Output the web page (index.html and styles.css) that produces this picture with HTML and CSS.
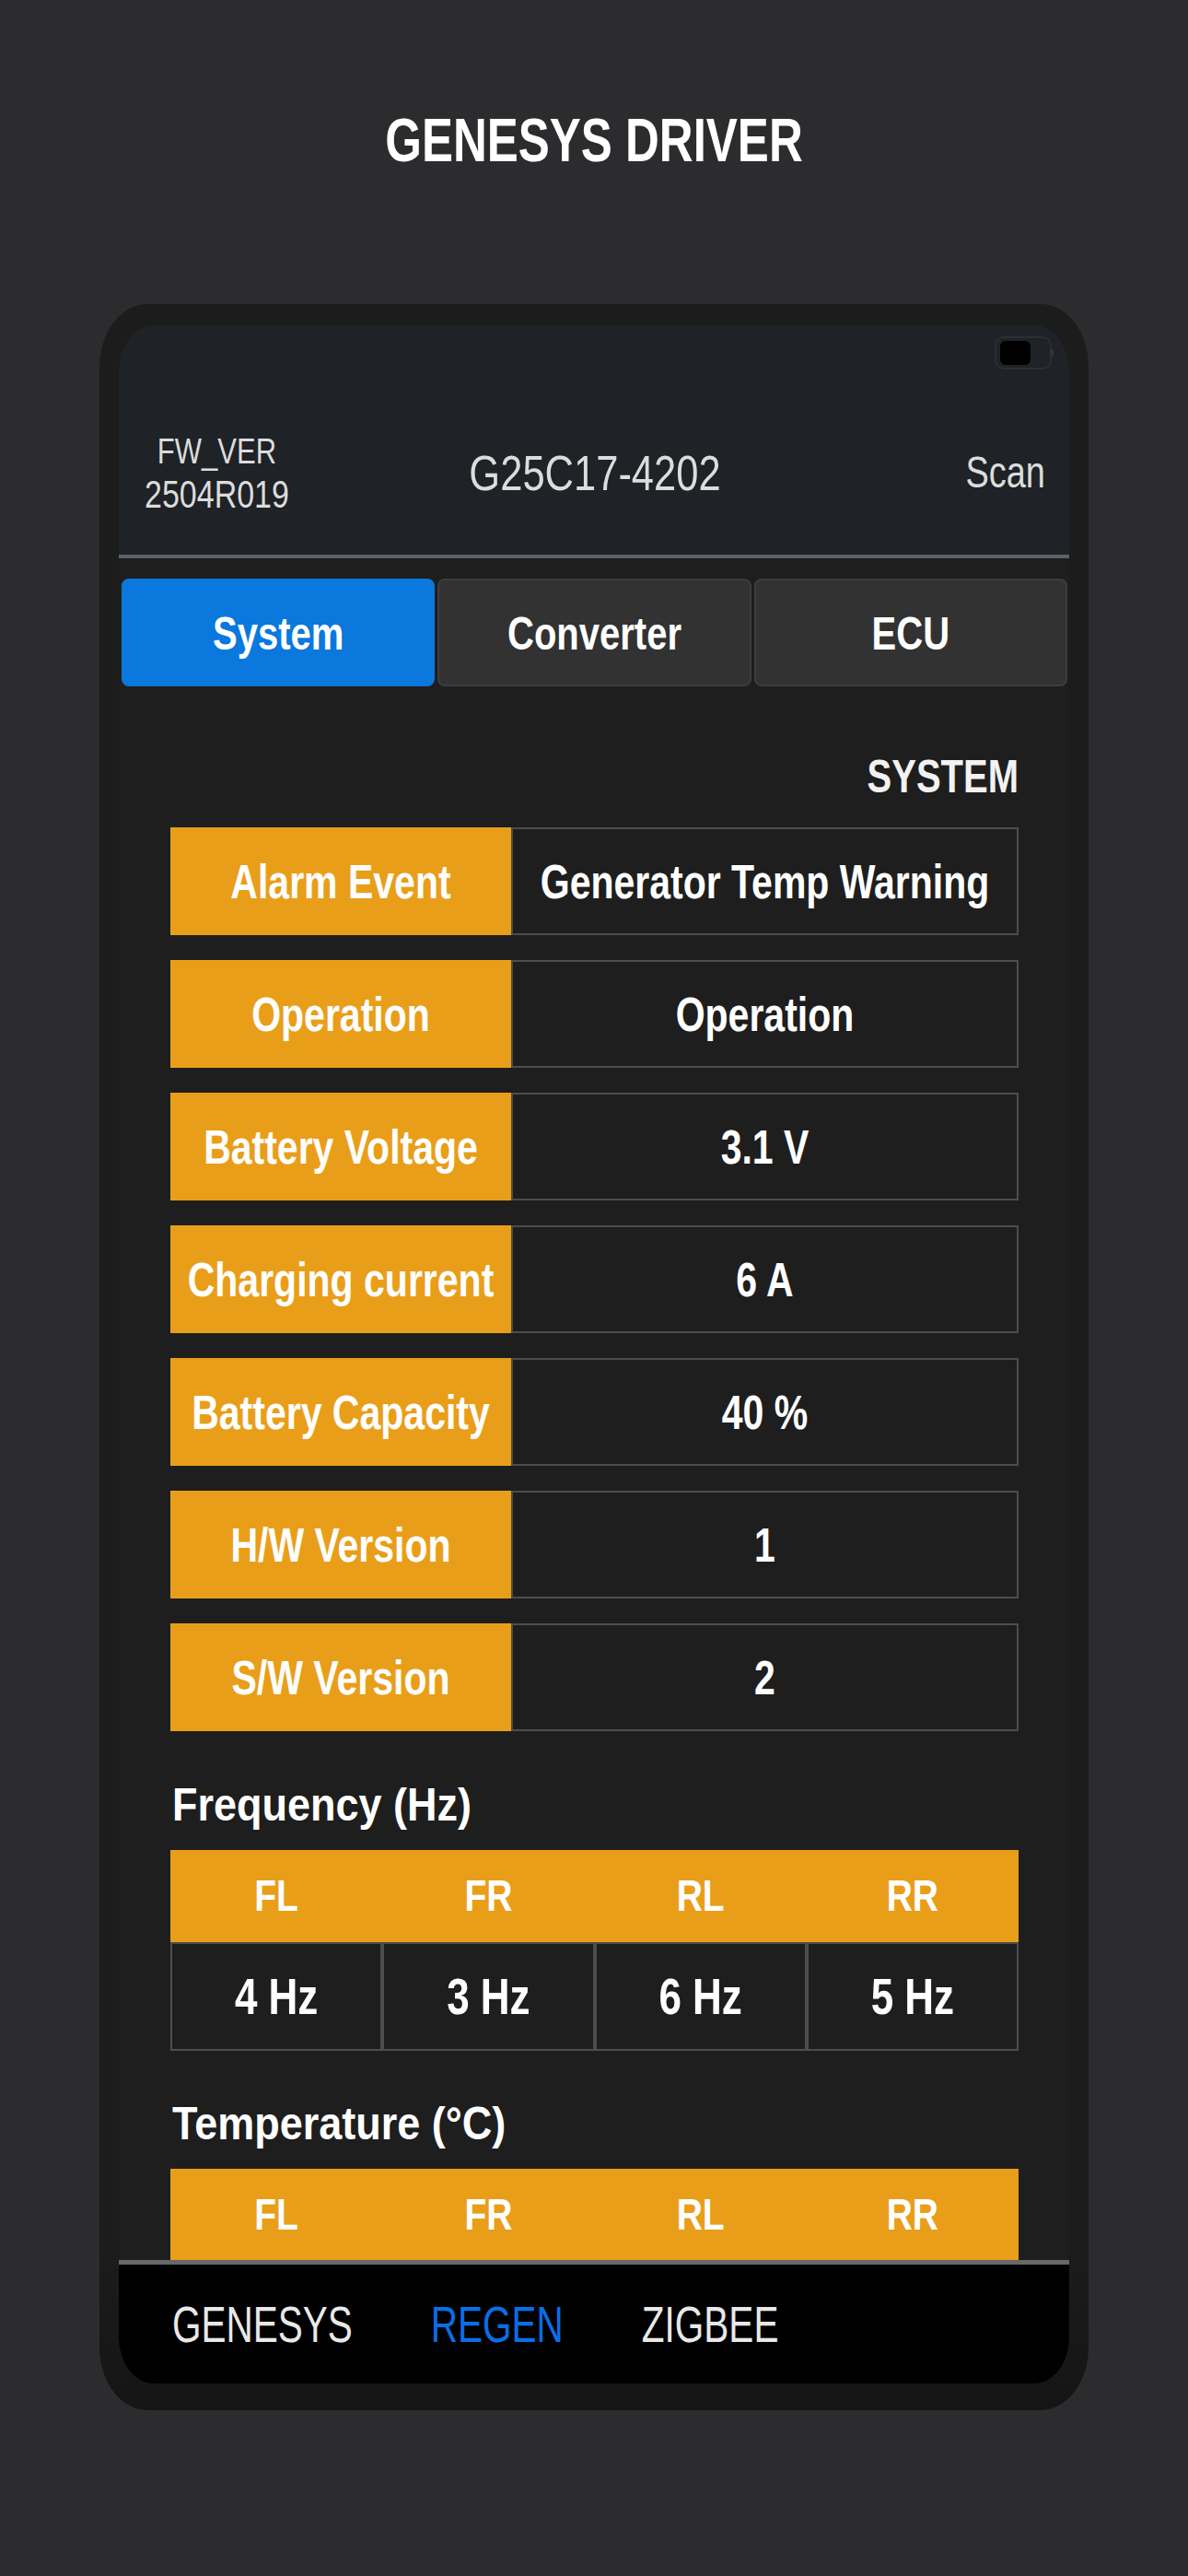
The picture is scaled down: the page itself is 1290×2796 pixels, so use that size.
FILE: index.html
```html
<!DOCTYPE html>
<html lang="en">
<head>
  <meta charset="UTF-8">
  <title>Genesys Driver</title>
  <link rel="stylesheet" href="styles.css">
</head>
<body>
  <div class="page">
    <h1 class="title"><span class="tx-title">GENESYS DRIVER</span></h1>

    <!-- Phone mockup -->
    <div class="phone">
      <div class="screen">

        <!-- Top bar: firmware, device id, scan -->
        <header class="topbar">
          <div class="camera"><span class="lens"></span><span class="dot"></span></div>
          <div class="fw">
            <div class="fw-label">FW_VER</div>
            <div class="fw-num">2504R019</div>
          </div>
          <div class="device"><span class="tx">G25C17-4202</span></div>
          <div class="scan"><span class="tx">Scan</span></div>
        </header>

        <main class="main">
          <!-- Tabs -->
          <div class="tabs">
            <button class="tab active"><span class="tx">System</span></button>
            <button class="tab"><span class="tx">Converter</span></button>
            <button class="tab"><span class="tx">ECU</span></button>
          </div>

          <section class="content">
            <h2 class="section-title"><span class="tx">SYSTEM</span></h2>

            <div class="rows">
              <div class="row">
                <div class="label"><span class="tx">Alarm Event</span></div>
                <div class="value"><span class="tx">Generator Temp Warning</span></div>
              </div>
              <div class="row">
                <div class="label"><span class="tx">Operation</span></div>
                <div class="value"><span class="tx">Operation</span></div>
              </div>
              <div class="row">
                <div class="label"><span class="tx">Battery Voltage</span></div>
                <div class="value"><span class="tx">3.1 V</span></div>
              </div>
              <div class="row">
                <div class="label"><span class="tx">Charging current</span></div>
                <div class="value"><span class="tx">6 A</span></div>
              </div>
              <div class="row">
                <div class="label"><span class="tx">Battery Capacity</span></div>
                <div class="value"><span class="tx">40 %</span></div>
              </div>
              <div class="row">
                <div class="label"><span class="tx">H/W Version</span></div>
                <div class="value"><span class="tx">1</span></div>
              </div>
              <div class="row">
                <div class="label"><span class="tx">S/W Version</span></div>
                <div class="value"><span class="tx">2</span></div>
              </div>
            </div>

            <!-- Frequency per wheel -->
            <h3 class="group-title"><span class="tx-group">Frequency (Hz)</span></h3>
            <div class="wheel-table">
              <div class="wheel-head">
                <div><span class="tx">FL</span></div>
                <div><span class="tx">FR</span></div>
                <div><span class="tx">RL</span></div>
                <div><span class="tx">RR</span></div>
              </div>
              <div class="wheel-vals">
                <div><span class="tx">4 Hz</span></div>
                <div><span class="tx">3 Hz</span></div>
                <div><span class="tx">6 Hz</span></div>
                <div><span class="tx">5 Hz</span></div>
              </div>
            </div>

            <!-- Temperature per wheel -->
            <h3 class="group-title"><span class="tx-group">Temperature (°C)</span></h3>
            <div class="wheel-table">
              <div class="wheel-head">
                <div><span class="tx">FL</span></div>
                <div><span class="tx">FR</span></div>
                <div><span class="tx">RL</span></div>
                <div><span class="tx">RR</span></div>
              </div>
            </div>
          </section>
        </main>

        <!-- Bottom navigation -->
        <nav class="bottom-nav">
          <span class="nav-item">GENESYS</span>
          <span class="nav-item active">REGEN</span>
          <span class="nav-item">ZIGBEE</span>
        </nav>

      </div>
    </div>
  </div>
</body>
</html>
```

FILE: styles.css
```css
/* Reset */
* {
  box-sizing: border-box;
  margin: 0;
  padding: 0;
}
html, body {
  background-color: #2c2c2e;
}
body {
  font-family: "Liberation Sans", Arial, sans-serif;
  color: #fff;
  min-height: 2796px;
}

/* the screenshot is stretched vertically, so text is too */
.tx {
  display: inline-block;
  transform: scaleY(1.25);
}
.tx-title {
  display: inline-block;
  transform: scaleY(1.32);
}
.tx-group {
  display: inline-block;
  transform: scaleY(1.1);
}

/* Page title */
.title {
  padding-top: 123px;
  font-size: 51px;
  line-height: 60px;
  font-weight: bold;
  text-align: center;
  color: #fff;
}

/* Phone frame */
.phone {
  width: 1074px;
  height: 2286px;
  margin: 147px auto 0;
  padding: 23px 21px 29px;
  border-radius: 52px / 68px;
  background: linear-gradient(#1c1c1c, #1c1c1c 92%, #151515);
}
.screen {
  height: 100%;
  display: flex;
  flex-direction: column;
  border-radius: 38px / 50px;
  overflow: hidden;
  background-color: #1e1e1e;
}

/* Top bar */
.topbar {
  position: relative;
  height: 253px;
  padding: 71px 26px 0 28px;
  display: grid;
  grid-template-columns: 1fr auto 1fr;
  align-items: center;
  background-color: #1f2226;
  border-bottom: 4px solid #5f6266;
  color: #dcdcdc;
}
.camera {
  position: absolute;
  top: 12px;
  right: 19px;
  width: 62px;
  height: 36px;
  padding: 3px 4px;
  display: flex;
  align-items: center;
  gap: 6px;
  border: 2px solid #2a2f34;
  border-radius: 10px;
}
.camera .lens {
  width: 33px;
  height: 26px;
  border-radius: 6px;
  background-color: #000;
}
.camera .dot {
  width: 3px;
  height: 8px;
  margin-left: auto;
  margin-right: -8px;
  border-radius: 2px;
  background-color: #30353a;
}
.fw {
  justify-self: start;
  text-align: center;
  line-height: 37px;
  transform: scaleY(1.25);
}
.fw-label {
  font-size: 31px;
}
.fw-num {
  font-size: 34px;
}
.device {
  font-size: 43.5px;
  line-height: 56px;
}
.scan {
  justify-self: end;
  font-size: 38px;
  line-height: 50px;
}

/* Main scroll area */
.main {
  flex: 1;
  min-height: 0;
  overflow: hidden;
}

/* Tabs */
.tabs {
  display: flex;
  gap: 3px;
  height: 117px;
  margin-top: 22px;
  padding: 0 2px 0 3px;
}
.tab {
  flex: 1;
  display: flex;
  align-items: center;
  justify-content: center;
  font-family: inherit;
  font-size: 40px;
  font-weight: bold;
  line-height: 50px;
  color: #fff;
  background-color: #323232;
  border: 2px solid #3d3d3d;
  border-radius: 8px;
}
.tab.active {
  background-color: #0a78dc;
  border-color: #0a78dc;
}

/* Content */
.content {
  padding: 0 55px 0 56px;
}
.section-title {
  margin: 72px 0 31px;
  text-align: right;
  font-size: 40px;
  line-height: 50px;
  font-weight: bold;
  color: #f2f2f2;
}

/* Key / value rows */
.rows {
  display: flex;
  flex-direction: column;
  gap: 27px;
}
.row {
  display: grid;
  grid-template-columns: 370px 1fr;
  height: 117px;
  font-size: 41px;
  line-height: 50px;
  font-weight: bold;
}
.label,
.value {
  display: flex;
  align-items: center;
  justify-content: center;
}
.label {
  background-color: #e99e1a;
}
.value {
  border: 2px solid #4d4d4d;
}

/* Wheel tables */
.group-title {
  margin: 55px 0 24px 2px;
  font-size: 45px;
  line-height: 50px;
  font-weight: bold;
}
.group-title + .wheel-table + .group-title {
  margin-top: 54px;
}
.wheel-head,
.wheel-vals {
  display: grid;
  grid-template-columns: repeat(4, 1fr);
  font-weight: bold;
}
.wheel-head {
  height: 100px;
  background-color: #e99e1a;
  font-size: 39px;
  line-height: 50px;
}
.wheel-vals {
  height: 118px;
  font-size: 44px;
  line-height: 50px;
}
.wheel-head div,
.wheel-vals div {
  display: flex;
  align-items: center;
  justify-content: center;
}
.wheel-vals div {
  border: 2px solid #4d4d4d;
}

/* Bottom navigation */
.bottom-nav {
  height: 134px;
  display: flex;
  align-items: center;
  gap: 85px;
  padding-left: 58px;
  background-color: #000;
  border-top: 5px solid #66686b;
}
.nav-item {
  display: inline-block;
  font-size: 40.5px;
  line-height: 50px;
  color: #e8e8e8;
  transform: scaleY(1.35);
}
.nav-item.active {
  color: #0a6ee6;
}
```
